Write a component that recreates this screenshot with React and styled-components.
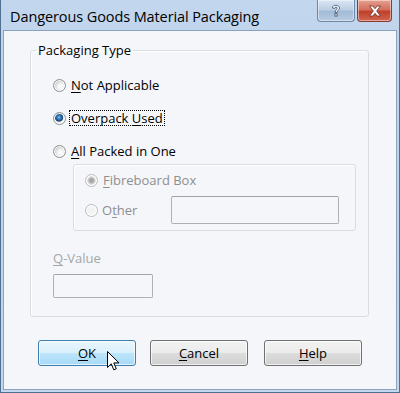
import React from 'react'
import styled, { createGlobalStyle } from 'styled-components'

const GlobalStyle = createGlobalStyle`
  html, body {
    margin: 0;
    padding: 0;
    background: #ffffff;
  }
  body {
    font-family: 'Open Sans', 'Liberation Sans', sans-serif;
  }
`

const Window = styled.div`
  width: 400px;
  height: 393px;
  box-sizing: border-box;
  display: flex;
  flex-direction: column;
  background: linear-gradient(180deg, #c2d6ee 0%, #bcd1ea 40%, #c4d8ef 100%);
  border: 1px solid #50708f;
  border-top: none;
  padding: 0 2px 2px 2px;
  overflow: hidden;
`

const TitleBar = styled.div`
  height: 30px;
  display: flex;
  align-items: flex-start;
  justify-content: space-between;
`

const Title = styled.div`
  font-size: 14.5px;
  line-height: 33px;
  color: #000;
  padding-left: 7px;
  letter-spacing: -0.1px;
`

const Caption = styled.div`
  display: flex;
  gap: 2px;
  margin-right: 5px;
`

const CaptionButton = styled.div`
  width: ${p => p.$w}px;
  height: 22px;
  box-sizing: border-box;
  border: 1px solid ${p => (p.$close ? '#8a3a31' : '#6f87a4')};
  border-top: none;
  border-radius: 0 0 4px 4px;
  display: flex;
  align-items: center;
  justify-content: center;
  background: ${p =>
    p.$close
      ? 'linear-gradient(180deg, #e6a090 0%, #d4705e 45%, #c0402c 55%, #d0654f 100%)'
      : 'linear-gradient(180deg, #d9e5f2 0%, #bdcfe4 45%, #a3bad6 55%, #b8cce3 100%)'};
  box-shadow: inset 0 0 0 1px rgba(255, 255, 255, 0.45);
`

const Client = styled.div`
  flex: 1;
  display: flex;
  flex-direction: column;
  background: #f4f6fa;
  border: 1px solid #8ba2bf;
  padding: 0 27px 0 26px;
`

const Group = styled.fieldset`
  margin: 11px 0 0 0;
  padding: 0 0 18px 0;
  border: 1px solid #d8dde4;
  border-radius: 3px;
  box-shadow: inset 1px 1px 0 #ffffff;
  display: flex;
  flex-direction: column;
`

const Legend = styled.legend`
  font-size: 13px;
  line-height: 16px;
  color: #000;
  padding: 0 2px;
  margin-left: 5px;
`

const Options = styled.div`
  display: flex;
  flex-direction: column;
  gap: 13px;
  padding: 17px 0 0 22px;
`

const RadioRow = styled.label`
  display: flex;
  align-items: center;
  height: ${p => p.$h || 20}px;
  font-size: 13px;
  color: ${p => (p.$disabled ? '#8f8f8f' : '#000')};
`

const Circle = styled.span`
  width: 13px;
  height: 13px;
  box-sizing: border-box;
  border-radius: 50%;
  border: 1px solid ${p => (p.$disabled ? '#b9bcc0' : '#8e9094')};
  background: ${p =>
    p.$checked
      ? p.$disabled
        ? 'radial-gradient(circle at 50% 50%, #9a9a9a 0, #b5b5b5 2.5px, #d6d6d6 3.5px, #ececec 4.5px, #f6f6f6 6px)'
        : 'radial-gradient(circle at 45% 40%, #8fc7f2 0, #3c86c8 1.5px, #1a4f86 3.5px, #3c5f7c 4px, #e8e8e8 4.6px, #f8f8f8 6px)'
      : p.$disabled
      ? 'radial-gradient(circle at 50% 50%, #f0f0f0 0, #f8f8f8 6px)'
      : 'radial-gradient(circle at 60% 60%, #ffffff 0, #f2f2f2 3px, #d9dadb 5px, #c6c7c9 6px)'};
  box-shadow: inset 0 0 0 1px #ffffff;
  margin-right: 4px;
  flex-shrink: 0;
`

const Text = styled.span`
  padding: 0 1px;
  line-height: 14px;
  outline: ${p => (p.$focus ? '1px dotted #000' : 'none')};
  outline-offset: 0;
`

const Key = styled.span`
  text-decoration: underline;
  text-underline-offset: 2px;
`

const SubBox = styled.div`
  margin: 3px 12px 0 42px;
  border: 1px solid #d8dde4;
  border-radius: 3px;
  box-shadow: inset 1px 1px 0 #ffffff;
  padding: 5px 0 6px 11px;
  display: flex;
  flex-direction: column;
  gap: 6px;
`

const OtherLabel = styled.span`
  width: 69px;
  line-height: 14px;
`

const Input = styled.div`
  width: ${p => p.$w}px;
  height: ${p => p.$h}px;
  box-sizing: border-box;
  border: 1px solid #adb2b5;
  border-top-color: #a0a4a8;
  border-radius: 2px;
  background: #f4f6fa;
`

const FieldLabel = styled.div`
  margin: 19px 0 8px 22px;
  font-size: 13px;
  line-height: 16px;
  color: #a4a7ab;
`

const FieldBox = styled.div`
  margin-left: 22px;
`

const ButtonRow = styled.div`
  display: flex;
  gap: 14px;
  margin: 23px 0 0 8px;
`

const Button = styled.div`
  position: relative;
  width: 98px;
  height: 26px;
  box-sizing: border-box;
  margin-left: ${p => p.$shift || 0}px;
  border: 1px solid ${p => (p.$hot ? '#3c7fb1' : '#707070')};
  border-radius: 3px;
  display: flex;
  align-items: center;
  justify-content: center;
  font-size: 13px;
  color: #000;
  background: ${p =>
    p.$hot
      ? 'linear-gradient(180deg, #eaf6fd 0%, #d9f0fc 49%, #bee6fd 50%, #a7d9f5 100%)'
      : 'linear-gradient(180deg, #f2f2f2 0%, #ebebeb 49%, #dddddd 50%, #cfcfcf 100%)'};
  box-shadow: inset 0 0 0 1px rgba(255, 255, 255, 0.7);
`

const Cursor = styled.svg`
  position: absolute;
  left: 68px;
  top: 10px;
`

function Radio({ checked, disabled, focus, h, children }) {
  return (
    <RadioRow $disabled={disabled} $h={h}>
      <Circle $checked={checked} $disabled={disabled} />
      <Text $focus={focus}>{children}</Text>
    </RadioRow>
  )
}

export default function App() {
  return (
    <>
      <GlobalStyle />
      <Window>
        <TitleBar>
          <Title>Dangerous Goods Material Packaging</Title>
          <Caption>
            <CaptionButton $w={38}>
              <svg width="10" height="14" viewBox="0 0 10 13">
                <path
                  d="M1.5 3.5 C1.5 1.2 3.3 0.8 5 0.8 C7 0.8 8.5 2 8.5 3.6 C8.5 5.4 6 6 6 8 L4 8 C4 5.4 6.3 5 6.3 3.7 C6.3 3 5.8 2.6 5 2.6 C4.1 2.6 3.7 3.2 3.7 4 Z"
                  fill="#fff"
                  stroke="#3b4f66"
                  strokeWidth="0.8"
                />
                <rect x="3.9" y="9.3" width="2.2" height="2.2" fill="#fff" stroke="#3b4f66" strokeWidth="0.8" />
              </svg>
            </CaptionButton>
            <CaptionButton $w={35} $close>
              <svg width="14" height="12" viewBox="0 0 14 12">
                <path
                  d="M1.5 1 L4.8 1 L7 3.7 L9.2 1 L12.5 1 L8.7 6 L12.5 11 L9.2 11 L7 8.3 L4.8 11 L1.5 11 L5.3 6 Z"
                  fill="#fff"
                  stroke="#6b2a22"
                  strokeWidth="0.8"
                  strokeLinejoin="round"
                />
              </svg>
            </CaptionButton>
          </Caption>
        </TitleBar>
        <Client>
          <Group>
            <Legend>Packaging Type</Legend>
            <Options>
              <Radio>
                <Key>N</Key>ot Applicable
              </Radio>
              <Radio checked focus>
                Overpack <Key>U</Key>sed
              </Radio>
              <Radio>
                <Key>A</Key>ll Packed in One
              </Radio>
            </Options>
            <SubBox>
              <Radio checked disabled>
                <Key>F</Key>ibreboard Box
              </Radio>
              <RadioRow $disabled $h={28}>
                <Circle $disabled />
                <OtherLabel>
                  O<Key>t</Key>her
                </OtherLabel>
                <Input $w={168} $h={28} />
              </RadioRow>
            </SubBox>
            <FieldLabel>
              <Key>Q</Key>-Value
            </FieldLabel>
            <FieldBox>
              <Input $w={100} $h={24} />
            </FieldBox>
          </Group>
          <ButtonRow>
            <Button $hot>
              <span>
                <Key>O</Key>K
              </span>
              <Cursor width="14" height="22" viewBox="0 0 14 22">
                <path
                  d="M0.5 0.5 L0.5 16.5 L4.3 12.8 L6.8 18.8 L9.3 17.8 L6.8 11.9 L12 11.9 Z"
                  fill="#fff"
                  stroke="#000"
                  strokeWidth="1"
                  strokeLinejoin="miter"
                />
              </Cursor>
            </Button>
            <Button>
              <span>
                <Key>C</Key>ancel
              </span>
            </Button>
            <Button $shift={2}>
              <span>
                <Key>H</Key>elp
              </span>
            </Button>
          </ButtonRow>
        </Client>
      </Window>
    </>
  )
}
